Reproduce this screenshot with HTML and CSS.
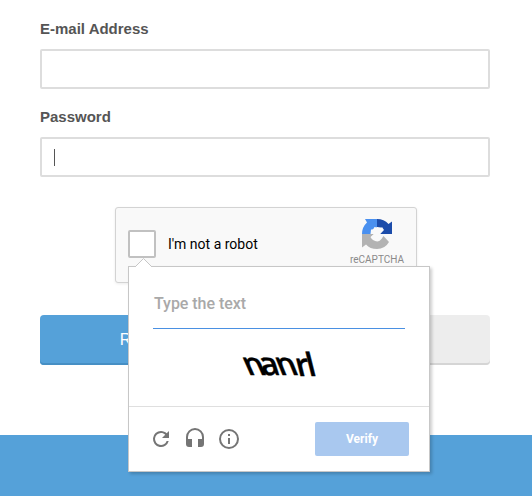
FILE: index.html
```html
<!DOCTYPE html>
<html lang="en">
<head>
<meta charset="utf-8">
<title>Sign up</title>
<link rel="stylesheet" href="styles.css">
</head>
<body>
<main class="form">
  <label class="label" for="email">E-mail Address</label>
  <div class="field" id="email"></div>
  <label class="label" for="password">Password</label>
  <div class="field" id="password"><span class="caret"></span></div>
  <section class="captcha">
    <span class="checkbox"></span>
    <span class="robot">I'm not a robot</span>
    <div class="brand">
      <svg width="32" height="32" viewBox="0 0 32 32">
        <path fill="#4a90ef" d="M4 1H16V9.500L13.500 9L12 11.500L10 11.500L9.500 16H1Q1 9 6 4.500Z"/>
        <path fill="#1c4caa" d="M16 1Q23 1 27.500 6L31 3.500V16H19L22 12.500L20 9.500L16 9Z"/>
        <path fill="#b3b3b3" d="M1 16H13L9.500 19.500L12 22Q17 25 20 21.500L22.500 18L28 24Q24 31 16 31Q9 31 5 26.500L1 29.500Z"/>
        <path fill="#f9f9f9" d="M16 9L19 11L21 9L23 12L19 16L22 18L20 21L17 19L14 22L12 19H9.500L13 16L10 14L12 11L14 12Z"/>
      </svg>
      <span class="brand-name">reCAPTCHA</span>
    </div>
    <div class="popup">
      <svg class="pointer" width="18" height="9" viewBox="0 0 18 9"><path d="M0 9L8.500 .5L17 9" fill="#fff" stroke="#c7c7c7"/></svg>
      <div class="challenge">
        <div class="answer">Type the text</div>
        <svg class="word" width="80" height="34" viewBox="0 0 80 34">
          <text transform="translate(7 28) skewX(24)">n</text>
          <text transform="translate(22 28) skewX(18)">a</text>
          <text transform="translate(39 28) skewX(22)">n</text>
          <text transform="translate(57 29) skewX(14)">r</text>
          <text transform="translate(68 29) skewX(14)">l</text>
        </svg>
      </div>
      <div class="toolbar">
        <svg class="icon reload" width="24" height="24" viewBox="0 0 24 24"><path d="M17.650 6.350C16.200 4.900 14.210 4 12 4a8 8 0 1 0 7.730 10h-2.080A6 6 0 1 1 12 6c1.660 0 3.140.69 4.220 1.780L13 11h7V4z"/></svg>
        <svg class="icon audio" width="24" height="24" viewBox="0 0 24 24"><path d="M12 1a9 9 0 0 0-9 9v7a3 3 0 0 0 3 3h3v-8H5v-2a7 7 0 0 1 14 0v2h-4v8h3a3 3 0 0 0 3-3v-7a9 9 0 0 0-9-9z"/></svg>
        <svg class="icon info" width="24" height="24" viewBox="0 0 24 24"><path d="M11 17h2v-6h-2v6zm1-15a10 10 0 1 0 0 20 10 10 0 0 0 0-20zm0 18a8 8 0 1 1 0-16 8 8 0 0 1 0 16zM11 9h2V7h-2v2z"/></svg>
        <span class="verify">Verify</span>
      </div>
    </div>
  </section>
  <div class="actions">
    <span class="button primary">Register</span>
    <span class="button secondary"></span>
  </div>
</main>
<footer class="footer"></footer>
</body>
</html>
```
FILE: styles.css
```css
* { box-sizing: border-box; }
body {
  margin: 0;
  height: 496px;
  overflow: hidden;
  background: #fff;
  font-family: "Liberation Sans", Arial, sans-serif;
  display: flex;
  flex-direction: column;
}
svg { display: block; }
.form { width: 450px; margin-left: 40px; padding-top: 19px; }
.label {
  display: block;
  height: 20px;
  margin-bottom: 10px;
  line-height: 20px;
  font-size: 15px;
  font-weight: bold;
  color: #555;
}
.field {
  height: 40px;
  margin-bottom: 18px;
  padding: 10px 12px;
  border: 2px solid #ddd;
  border-radius: 2px;
}
#password { margin-bottom: 30px; }
.caret { display: block; width: 1px; height: 17px; background: #555; }
.captcha {
  position: relative;
  display: flex;
  align-items: center;
  width: 302px;
  height: 76px;
  margin-left: 75px;
  padding: 0 12px 2px 12px;
  border: 1px solid #d3d3d3;
  border-radius: 3px;
  background: #f9f9f9;
  box-shadow: 0 1px 3px rgba(0, 0, 0, .08);
  font-family: Roboto, sans-serif;
}
.checkbox {
  width: 28px;
  height: 28px;
  border: 2px solid #c1c1c1;
  border-radius: 2px;
  background: #fff;
}
.robot { margin-left: 12px; font-size: 14px; color: #000; }
.brand {
  margin-left: auto;
  align-self: flex-start;
  padding-top: 10px;
  display: flex;
  flex-direction: column;
  align-items: center;
}
.brand-name { margin-top: 4px; font-size: 10px; line-height: 12px; color: #8a8a8a; }
.popup {
  position: absolute;
  z-index: 2;
  left: 12px;
  top: 58px;
  width: 302px;
  height: 206px;
  border: 1px solid #c7c7c7;
  background: #fff;
  box-shadow: 2px 2px 3px rgba(0, 0, 0, .2);
}
.pointer { position: absolute; left: 6px; top: -9px; }
.challenge { height: 139px; padding: 22px 24px 0; }
.answer {
  height: 40px;
  padding-left: 1px;
  border-bottom: 1px solid #4a90e2;
  line-height: 30px;
  font-size: 16px;
  font-weight: 500;
  letter-spacing: -.04px;
  color: #a9a9a9;
}
.word { margin: 18px 0 0 88px; overflow: visible; }
.word text { font: 600 32px "Open Sans", sans-serif; fill: #000; stroke: #000; stroke-width: .4; }
.toolbar {
  display: flex;
  align-items: center;
  height: 65px;
  padding: 0 20px;
  border-top: 1px solid #dfdfdf;
}
.icon { fill: #757575; margin-right: 10px; }
.verify {
  width: 94px;
  height: 34px;
  margin-left: auto;
  border-radius: 2px;
  background: #a9c8ef;
  color: #fff;
  font-size: 12px;
  font-weight: bold;
  line-height: 34px;
  text-align: center;
}
.actions { display: flex; margin-top: 32px; }
.button {
  width: 225px;
  height: 50px;
  line-height: 50px;
  font-size: 16px;
  text-align: center;
}
.primary {
  padding-right: 6px;
  border-radius: 4px 0 0 4px;
  background: #55a1d9;
  box-shadow: inset 0 -2px #468fc4;
  color: #fff;
}
.secondary { border-radius: 0 4px 4px 0; background: #ededed; box-shadow: inset 0 -2px #d5d5d5; }
.footer { flex: 1; margin-top: 70px; background: #55a1d9; }
```
